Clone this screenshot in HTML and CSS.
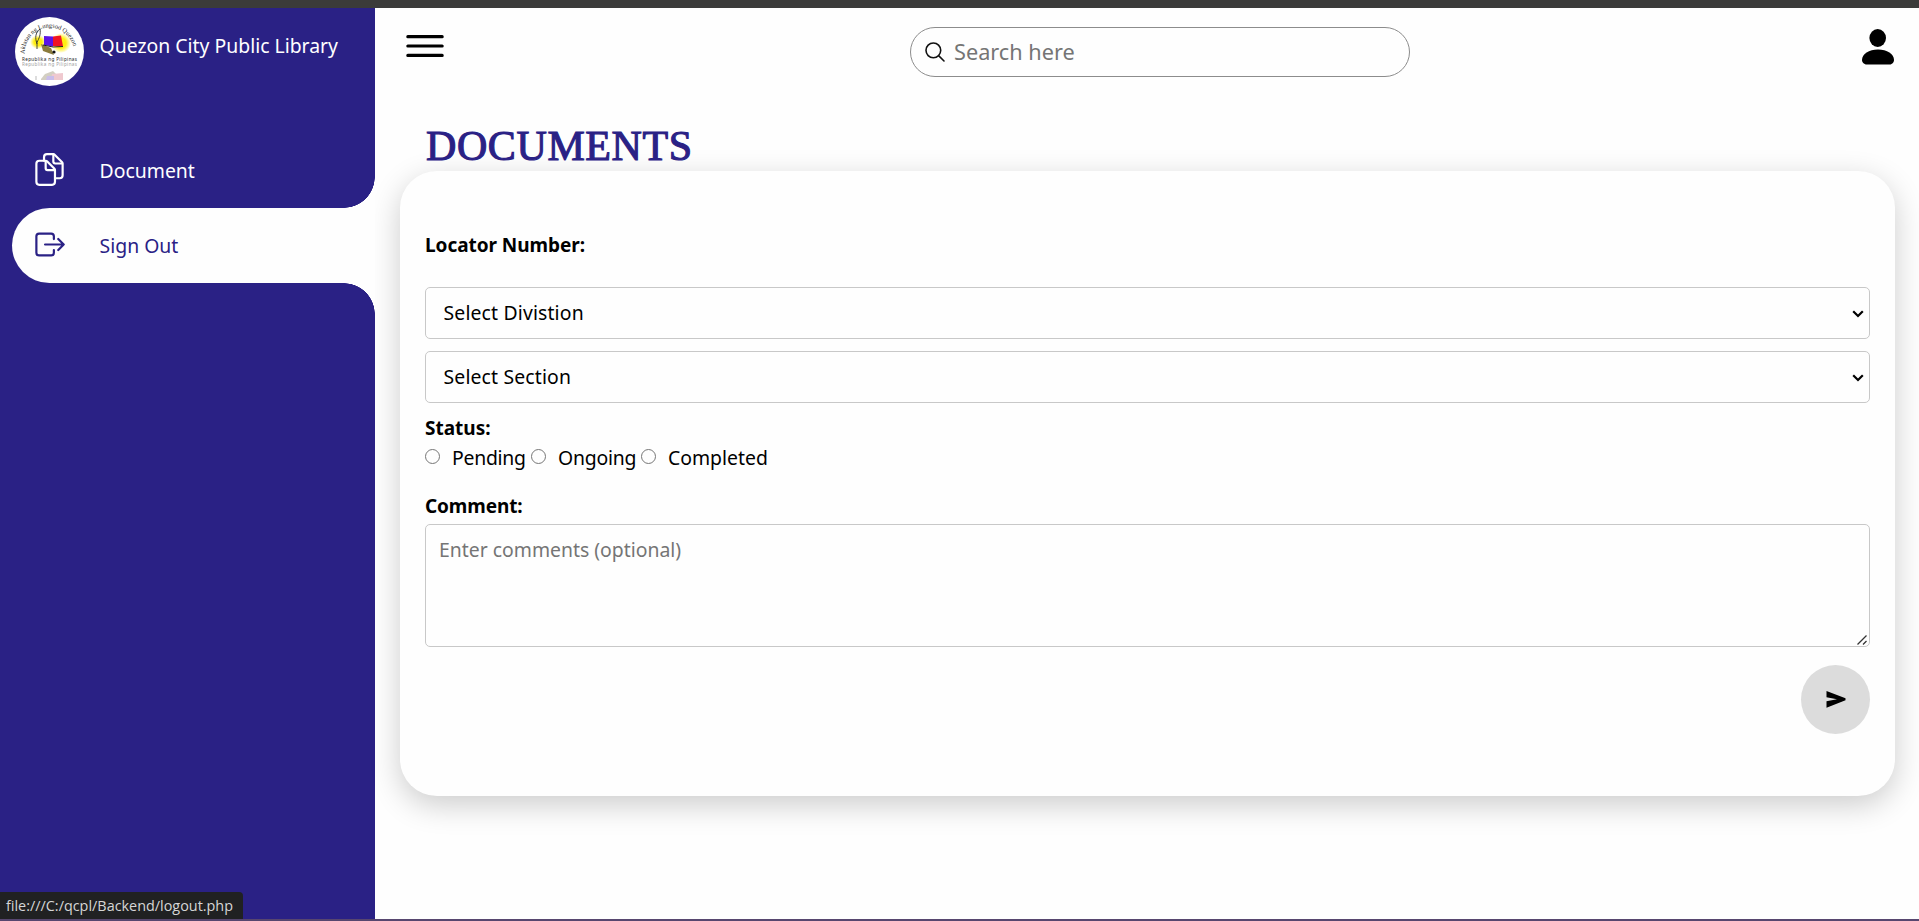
FILE: index.html
```html
<!DOCTYPE html>
<html lang="en">
<head>
<meta charset="utf-8">
<title>Quezon City Public Library</title>
<link rel="stylesheet" href="styles.css">
</head>
<body>
<div class="page">
  <aside class="sidebar">
    <a class="nav-item brand">
      <span class="nav-icon logo">
        <svg width="69" height="69" viewBox="0 0 69 69">
          <defs>
            <path id="arc" d="M9.500 37 A25 26.500 0 0 1 59.500 37 L59.500 45"/>
            <radialGradient id="glow"><stop offset=".5" stop-color="#ffee10"/><stop offset="1" stop-color="#ffee10" stop-opacity="0"/></radialGradient>
          </defs>
          <circle cx="34.500" cy="34.500" r="34.500" fill="#fff"/>
          <ellipse cx="46" cy="26" rx="10" ry="10" fill="url(#glow)"/>
          <ellipse cx="23" cy="25" rx="8" ry="7" fill="url(#glow)"/>
          <text class="logo-arc"><textPath href="#arc">Aklatan ng Lungsod Quezon</textPath></text>
          <path d="M26 27l10 4 3 7-11-4z" fill="#8a7b3c"/>
          <path d="M29 19l9 .500v10l-9-1.500z" fill="#5a14e6"/>
          <path d="M38 19.500l8-1 2 11-10-.500z" fill="#f01424"/>
          <path d="M28 28l10 2 10-.500" fill="none" stroke="#222"/>
          <path d="M25 12c-5 4-5 9-3 15M25 12c1 5-1 10-3 13M22 32l0-8" fill="none" stroke="#333" stroke-width=".9"/>
          <circle cx="39" cy="35" r="1.600" fill="#111"/>
          <text class="logo-name" x="7" y="43.500" textLength="55">Republika ng Pilipinas</text>
          <text class="logo-name faded" x="7" y="49" textLength="55">Republika ng Pilipinas</text>
          <path d="M26 62l4-5 8-3 5 5v4H26z" fill="#d3cfc2"/>
          <path d="M37 57l11-1v7H36z" fill="#efc9cf"/>
          <path d="M32 59h7v4h-8z" fill="#c9bdea"/>
          <path d="M21 59v4" stroke="#bbb"/>
        </svg>
      </span>
      <span class="nav-label brand-label">Quezon City Public Library</span>
    </a>
    <a class="nav-item">
      <span class="nav-icon">
        <svg width="35" height="35" viewBox="0 0 512 512" fill="none" stroke="currentColor" stroke-width="32" stroke-linejoin="round">
          <path d="M336 264.130V436c0 24.300-19.050 44-42.950 44H107c-23.950 0-43-19.700-43-44V172a44.260 44.260 0 0144-44h94.120a24.550 24.550 0 0117.490 7.360l109.150 111a25.400 25.400 0 017.240 17.770z"/>
          <path d="M200 128v108.240c0 15.300 12.790 28 28.410 28H336"/>
          <path stroke-linecap="round" d="M176 128V76c0-24.740 19.260-44 43-44h95a24.500 24.500 0 0117 7.300l109.500 111a25 25 0 017.500 17.700V340c0 24.740-19.260 44-43 44h-59"/>
          <path d="M312 32v108.200a28.400 28.400 0 0028.400 27.800H448"/>
        </svg>
      </span>
      <span class="nav-label">Document</span>
    </a>
    <a class="nav-item active">
      <span class="nav-icon">
        <svg width="35" height="35" viewBox="0 0 512 512" fill="none" stroke="currentColor" stroke-width="32" stroke-linecap="round" stroke-linejoin="round">
          <path d="M320 176v-40a40 40 0 00-40-40H104a40 40 0 00-40 40v240a40 40 0 0040 40h176a40 40 0 0040-40v-40M384 176l80 80-80 80M191 256h273"/>
        </svg>
      </span>
      <span class="nav-label signout-label">Sign Out</span>
    </a>
  </aside>

  <main class="main">
    <header class="topbar">
      <span class="menu">
        <svg width="50" height="50" viewBox="0 0 512 512" stroke="#000" stroke-width="32" stroke-linecap="round">
          <path d="M80 160h352M80 256h352M80 352h352"/>
        </svg>
      </span>
      <label class="search">
        <svg width="24" height="24" viewBox="0 0 512 512" fill="none" stroke="#111" stroke-width="34" stroke-linecap="round">
          <path d="M221 64a157.200 157.200 0 10157 157A157.100 157.100 0 00221 64zM338.300 338.300L448 448"/>
        </svg>
        <input class="search-input" type="text" placeholder="Search here">
      </label>
      <span class="user">
        <svg width="32" height="36" viewBox="0 0 32 36">
          <ellipse cx="15.700" cy="9" rx="8.300" ry="9"/>
          <path d="M5 35.500C1.500 35.500 0 33 0 31 0 25 7 20.500 16 20.500s16 4.500 16 10.500c0 2-1.500 4.500-4.500 4.500z"/>
        </svg>
      </span>
    </header>
    <h1 class="title">DOCUMENTS</h1>
    <form class="card">
      <div class="label locator">Locator Number:</div>
      <div class="select-wrap">
        <select class="field division"><option>Select Divistion</option></select>
        <svg class="chevron" width="12" height="8" viewBox="0 0 12 8"><path d="M1.200 1.200L6 6l4.800-4.800" fill="none" stroke="#000" stroke-width="2.200"/></svg>
      </div>
      <div class="select-wrap">
        <select class="field section"><option>Select Section</option></select>
        <svg class="chevron" width="12" height="8" viewBox="0 0 12 8"><path d="M1.200 1.200L6 6l4.800-4.800" fill="none" stroke="#000" stroke-width="2.200"/></svg>
      </div>
      <div class="label status">Status:</div>
      <div class="radios">
        <label class="choice pending"><input type="radio" name="status"><span>Pending</span></label>
        <label class="choice ongoing"><input type="radio" name="status"><span>Ongoing</span></label>
        <label class="choice completed"><input type="radio" name="status"><span>Completed</span></label>
      </div>
      <div class="label comment">Comment:</div>
      <div class="area-wrap">
        <textarea class="area" placeholder="Enter comments (optional)"></textarea>
        <svg class="grip" width="12" height="12" viewBox="0 0 12 12"><path d="M1.500 10.500l9-9M7 10.500l3.500-3.500" stroke="#333" stroke-width="1.300"/></svg>
      </div>
      <button class="send" type="button">
        <svg width="20" height="17" viewBox="0 0 20 17"><path d="M.500 0L19.500 7.300v1.900L.500 16.700V10.300L11 8.300.500 6.300z"/></svg>
      </button>
    </form>
  </main>
  <div class="link-status">file:///C:/qcpl/Backend/logout.php</div>
</div>
</body>
</html>
```
FILE: styles.css
```css
* {
  box-sizing: border-box;
  margin: 0;
  padding: 0;
}

body {
  font-family: "Noto Sans", "Open Sans", sans-serif;
  font-size: 19.4px;
  background: #fefefe;
  overflow: hidden;
}

.page {
  position: relative;
  display: flex;
  height: 921px;
  border-top: 8px solid #3b3b3a;
  border-bottom: 2px solid #57466f;
}

.sidebar {
  width: 375px;
  flex: none;
  padding-left: 12px;
  background: #2a2185;
  color: #fff;
}

.nav-item {
  position: relative;
  display: flex;
  height: 75px;
  border-radius: 37.5px 0 0 37.5px;
}

.brand {
  margin-bottom: 50px;
}

.nav-icon {
  width: 75px;
  height: 75px;
  flex: none;
  display: flex;
  align-items: center;
  justify-content: center;
  padding-right: 1px;
  padding-bottom: 2px;
}

.nav-icon.logo {
  align-items: flex-start;
  justify-content: flex-start;
  padding: 9px 0 0 3px;
}

.logo svg {
  display: block;
  flex: none;
}

.logo-arc {
  font-family: "Liberation Serif", serif;
  font-size: 6.3px;
  fill: #222;
}

.logo-name {
  font-size: 4.6px;
  fill: #222;
}

.faded {
  opacity: .45;
}

.nav-label {
  padding-left: 12.6px;
  line-height: 75px;
  white-space: nowrap;
}

.active {
  background: #fefefe;
  color: #2a2185;
}

.active::before,
.active::after {
  content: "";
  position: absolute;
  right: 0;
  width: 31px;
  height: 31px;
}

.active::before {
  bottom: 100%;
  background: radial-gradient(circle at 0 0, transparent 30.5px, #fefefe 31px);
}

.active::after {
  top: 100%;
  background: radial-gradient(circle at 0 100%, transparent 30.5px, #fefefe 31px);
}

.main {
  flex: 1;
  min-width: 0;
  padding: 0 24px 0 25px;
}

.topbar {
  display: flex;
  height: 75px;
}

.menu {
  padding: 13px 0 0;
  width: 50px;
}

.menu svg {
  display: block;
}

.search {
  display: flex;
  align-items: center;
  width: 500px;
  height: 50px;
  margin: 19px 0 0 460px;
  padding-left: 12px;
  border: 1px solid #8c8c8c;
  border-radius: 25px;
}

.search-input {
  flex: 1;
  min-width: 0;
  margin-left: 7px;
  padding-bottom: 1px;
  border: 0;
  outline: 0;
  background: transparent;
  font: 21.7px "Noto Sans", sans-serif;
}

::placeholder {
  color: #757575;
}

.user {
  padding-top: 21px;
  padding-right: 1px;
  flex: none;
  margin-left: auto;
}

.user svg {
  display: block;
}

.title {
  height: 88px;
  padding: 38px 0 0 26px;
  font: 400 42px/50px "Liberation Serif", serif;
  letter-spacing: .6px;
  color: #2a2185;
  -webkit-text-stroke: 1.1px #2a2185;
}

.card {
  display: flex;
  flex-direction: column;
  height: 625px;
  padding: 60px 25px 0;
  background: #fefefe;
  border-radius: 37px;
  box-shadow: 0 9px 31px rgba(0, 0, 0, .2);
}

.label {
  font-weight: 700;
  font-size: 19px;
  line-height: 28px;
}

.locator {
  height: 56px;
  letter-spacing: -.05px;
}

.select-wrap {
  position: relative;
  margin-bottom: 12px;
}

.field {
  display: block;
  width: 100%;
  height: 52px;
  padding: 0 0 2px 17.5px;
  appearance: none;
  border: 1px solid #c8c8c8;
  border-radius: 5px;
  background: transparent;
  color: #000;
  font: 19.4px "Noto Sans", sans-serif;
  letter-spacing: .15px;
}

.chevron {
  position: absolute;
  right: 6px;
  top: 23px;
}

.status {
  height: 28px;
  margin-top: -1px;
}

.radios {
  display: flex;
  height: 48px;
  line-height: 32px;
}

.choice {
  display: flex;
  white-space: nowrap;
}

.choice input {
  width: 15px;
  height: 15px;
  margin: 7px 12px 0 0;
  appearance: none;
  border: 1px solid #767676;
  border-radius: 50%;
}

.pending {
  width: 106px;
  letter-spacing: -.25px;
}

.ongoing {
  width: 110px;
  letter-spacing: -.2px;
}

.comment {
  height: 34px;
  line-height: 32px;
  letter-spacing: -.1px;
}

.area-wrap {
  position: relative;
  height: 123px;
}

.area {
  display: block;
  width: 100%;
  height: 123px;
  padding: 12px 13px;
  border: 1px solid #c8c8c8;
  border-radius: 5px;
  background: transparent;
  resize: none;
  font: 19.4px/26px "Noto Sans", sans-serif;
}

.grip {
  position: absolute;
  right: 2px;
  bottom: 1px;
}

.send {
  display: flex;
  align-items: center;
  justify-content: center;
  align-self: flex-end;
  width: 69px;
  height: 69px;
  margin-top: 18px;
  border: 0;
  border-radius: 50%;
  background: #dcdcdc;
}

.link-status {
  position: absolute;
  left: 0;
  bottom: 0;
  width: 243px;
  height: 27px;
  padding-left: 6px;
  border-radius: 0 4px 0 0;
  background: #202122;
  color: #d6d6d6;
  font: 14.4px/27px "Open Sans", sans-serif;
  white-space: nowrap;
}
```
